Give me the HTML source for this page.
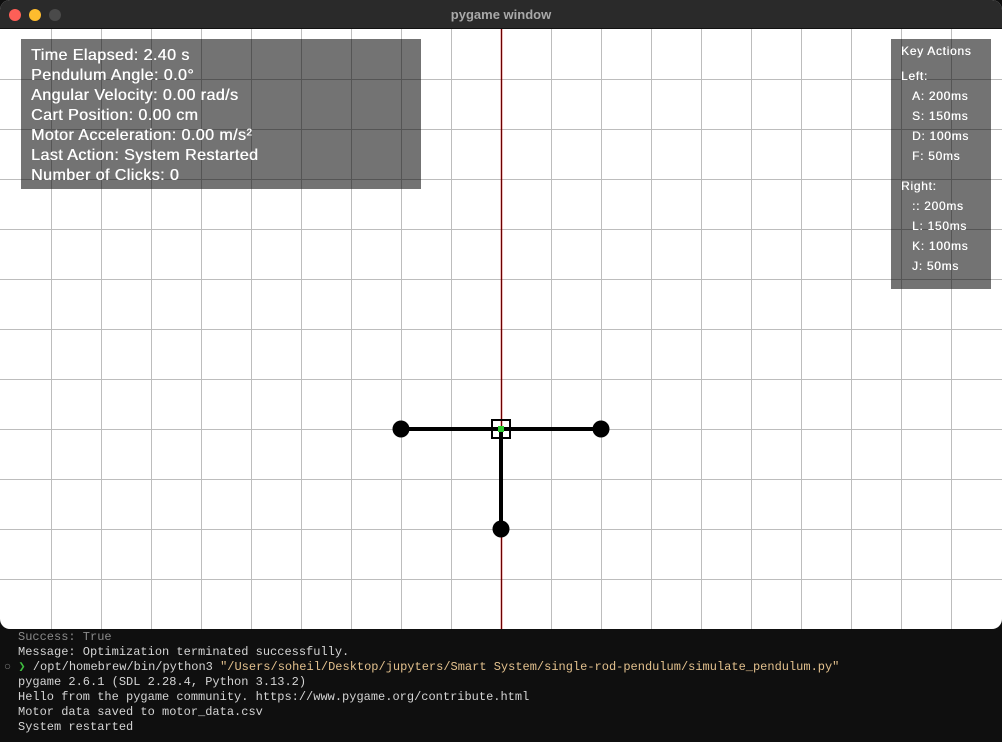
<!DOCTYPE html>
<html><head><meta charset="utf-8"><style>
body{margin:0;width:1002px;height:742px;background:#0f0f0f;overflow:hidden;position:relative;font-family:"Liberation Sans",sans-serif}
.win{position:absolute;left:0;top:0;width:1002px;height:629px;border-radius:10px;overflow:hidden;background:#fff}
.tb{position:absolute;left:0;top:0;width:1002px;height:29px;background:#2a2a2a;border-bottom:1px solid #111;box-sizing:border-box}
.tb .t{position:absolute;width:100%;text-align:center;top:7px;color:#a9a9a9;font-size:13px;font-weight:bold}
.d{position:absolute;top:9px;width:12px;height:12px;border-radius:50%}
.p{position:absolute;background:rgba(0,0,0,0.55);color:#fff}
.p1 div{font-size:16px;height:20px;line-height:20px;letter-spacing:0.45px;text-shadow:0.4px 0 0 #fff}
.p2 div{font-size:12px;height:20px;line-height:20px;letter-spacing:0.7px;text-shadow:0.3px 0 0 #fff}
.p2 .i{padding-left:11px}
.term{position:absolute;left:18px;top:630px;font-family:"Liberation Mono",monospace;font-size:12px;color:#d4d4d4;line-height:15px}
</style></head><body>
<div class="win">
<svg width="1002" height="629" style="position:absolute;left:0;top:0">
<g stroke="#bdbdbd" stroke-width="1">
<path d="M51.5 29V629M101.5 29V629M151.5 29V629M201.5 29V629M251.5 29V629M301.5 29V629M351.5 29V629M401.5 29V629M451.5 29V629M551.5 29V629M601.5 29V629M651.5 29V629M701.5 29V629M751.5 29V629M801.5 29V629M851.5 29V629M901.5 29V629M951.5 29V629"/>
<path d="M0 79.5H1002M0 129.5H1002M0 179.5H1002M0 229.5H1002M0 279.5H1002M0 329.5H1002M0 379.5H1002M0 429.5H1002M0 479.5H1002M0 529.5H1002M0 579.5H1002"/>
</g>
<line x1="501.5" y1="29" x2="501.5" y2="629" stroke="#b00" stroke-width="1.5"/>
<line x1="501.5" y1="29" x2="501.5" y2="629" stroke="#300" stroke-width="0.6"/>
<line x1="401" y1="429" x2="601" y2="429" stroke="#000" stroke-width="4"/>
<line x1="501" y1="429" x2="501" y2="529" stroke="#000" stroke-width="4"/>
<circle cx="401" cy="429" r="8.5"/><circle cx="601" cy="429" r="8.5"/><circle cx="501" cy="529" r="8.5"/>
<rect x="492" y="420" width="18" height="18" fill="none" stroke="#000" stroke-width="2"/>
<rect x="498" y="426" width="6" height="6" fill="#2ecc2e"/>
</svg>
<div class="tb"><div class="d" style="left:9px;background:#fe5f57"></div><div class="d" style="left:29px;background:#febc2e"></div><div class="d" style="left:49px;background:#4a4a4a"></div><div class="t">pygame window</div></div>
<div class="p p1" style="left:21px;top:39px;width:400px;height:150px;padding:7px 0 0 10px;box-sizing:border-box">
<div>Time Elapsed: 2.40 s</div><div>Pendulum Angle: 0.0°</div><div>Angular Velocity: 0.00 rad/s</div><div>Cart Position: 0.00 cm</div><div>Motor Acceleration: 0.00 m/s²</div><div>Last Action: System Restarted</div><div>Number of Clicks: 0</div></div>
<div class="p p2" style="left:891px;top:39px;width:100px;height:250px;padding:2px 0 0 10px;box-sizing:border-box">
<div>Key Actions</div><div style="margin-top:5px">Left:</div><div class="i">A: 200ms</div><div class="i">S: 150ms</div><div class="i">D: 100ms</div><div class="i">F: 50ms</div><div style="margin-top:10px">Right:</div><div class="i">:: 200ms</div><div class="i">L: 150ms</div><div class="i">K: 100ms</div><div class="i">J: 50ms</div></div>
</div>
<div class="term">
<div style="color:#8a8a8a">Success: True</div>
<div>Message: Optimization terminated successfully.</div>
<div style="margin-left:-14px"><span style="color:#777">○</span> <span style="color:#3fbf3f">❯</span> <span style="color:#d4d4d4">/opt/homebrew/bin/python3</span> <span style="color:#e2c08d">"/Users/soheil/Desktop/jupyters/Smart System/single-rod-pendulum/simulate_pendulum.py"</span></div>
<div>pygame 2.6.1 (SDL 2.28.4, Python 3.13.2)</div>
<div>Hello from the pygame community. https://www.pygame.org/contribute.html</div>
<div>Motor data saved to motor_data.csv</div>
<div>System restarted</div>
</div>
</body></html>
